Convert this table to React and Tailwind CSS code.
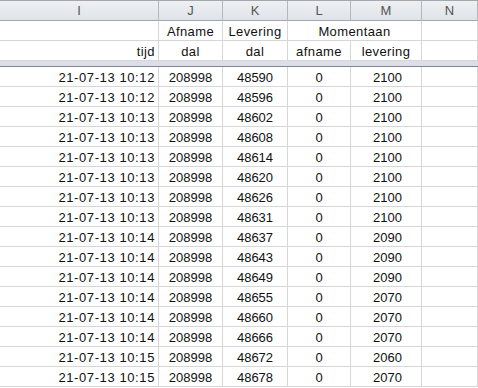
import React from "react";

const rows = [
  ["21-07-13 10:12", "208998", "48590", "0", "2100"],
  ["21-07-13 10:12", "208998", "48596", "0", "2100"],
  ["21-07-13 10:13", "208998", "48602", "0", "2100"],
  ["21-07-13 10:13", "208998", "48608", "0", "2100"],
  ["21-07-13 10:13", "208998", "48614", "0", "2100"],
  ["21-07-13 10:13", "208998", "48620", "0", "2100"],
  ["21-07-13 10:13", "208998", "48626", "0", "2100"],
  ["21-07-13 10:13", "208998", "48631", "0", "2100"],
  ["21-07-13 10:14", "208998", "48637", "0", "2090"],
  ["21-07-13 10:14", "208998", "48643", "0", "2090"],
  ["21-07-13 10:14", "208998", "48649", "0", "2090"],
  ["21-07-13 10:14", "208998", "48655", "0", "2070"],
  ["21-07-13 10:14", "208998", "48660", "0", "2070"],
  ["21-07-13 10:14", "208998", "48666", "0", "2070"],
  ["21-07-13 10:15", "208998", "48672", "0", "2060"],
  ["21-07-13 10:15", "208998", "48678", "0", "2070"],
];

const cols = "grid grid-cols-[159px_64px_65px_63px_71px_1fr]";
const cell = "h-[20px] border-r border-b border-[#d6d6d6] flex items-center leading-none pt-[2px]";

export default function App() {
  return (
    <div className="w-[478px] h-[388px] overflow-hidden bg-white text-[13px] text-[#111] font-['Liberation_Sans',Arial,sans-serif]">
      {/* column letters */}
      <div className={`${cols} h-[21px] border-t border-b border-[#a3a8ae] bg-gradient-to-b from-[#eef0f3] to-[#dfe3e8] text-[#555]`}>
        {["I", "J", "K", "L", "M", "N"].map((c) => (
          <div key={c} className="border-r border-[#b3b8be] flex items-center justify-center">
            {c}
          </div>
        ))}
      </div>

      {/* header rows */}
      <div className={`${cols} tracking-[0.4px]`}>
        <div className={cell}></div>
        <div className={`${cell} justify-center`}>Afname</div>
        <div className={`${cell} justify-center`}>Levering</div>
        <div className={`${cell} col-span-2 justify-center`}>Momentaan</div>
        <div className={cell}></div>

        <div className={`${cell} justify-end pr-[3px]`}>tijd</div>
        <div className={`${cell} justify-center`}>dal</div>
        <div className={`${cell} justify-center`}>dal</div>
        <div className={`${cell} justify-center`}>afname</div>
        <div className={`${cell} justify-center`}>levering</div>
        <div className={cell}></div>
      </div>

      {/* frozen pane split */}
      <div className="h-[6px] bg-[#dcdee9] border-b border-[#7e858d]" />

      {/* data */}
      <div className={cols}>
        {rows.map((r, i) => (
          <React.Fragment key={i}>
            <div className={`${cell} justify-end pr-[3px] tracking-[0.6px]`}>{r[0]}</div>
            <div className={`${cell} justify-center`}>{r[1]}</div>
            <div className={`${cell} justify-center`}>{r[2]}</div>
            <div className={`${cell} justify-center`}>{r[3]}</div>
            <div className={`${cell} justify-center pl-[3px]`}>{r[4]}</div>
            <div className={cell}></div>
          </React.Fragment>
        ))}
      </div>
    </div>
  );
}
